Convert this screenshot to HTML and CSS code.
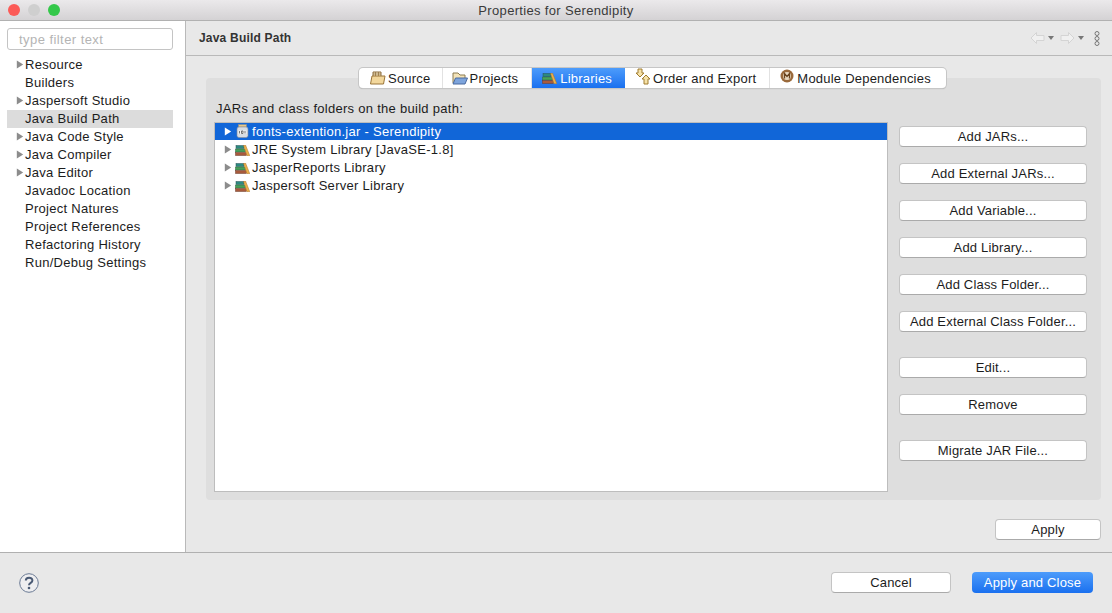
FILE: index.html
```html
<html>
    <head>
        <meta charset="utf-8">
        <title>Properties for Serendipity</title>
        <link rel="stylesheet" href="styles.css">
    </head>
    <body>
        <svg class="defs" width="0" height="0">
            <symbol id="lib" viewBox="0 0 15 11">
                <rect x="1" y="0.500" width="8" height="3" fill="#2c8a80" stroke="#27505a" stroke-width="0.500"/>
                <rect x="0.500" y="4" width="10" height="3" fill="#48a05a" stroke="#2c6a40" stroke-width="0.500"/>
                <rect x="0.500" y="7.500" width="11" height="3" fill="#a85a3c" stroke="#6a3a28" stroke-width="0.500"/>
                <path d="M8.500 0.500 L10.500 0 L14.800 10.800 L12 10.800 Z" fill="#eeb04a" stroke="#a8742a" stroke-width="0.500"/>
            </symbol>
            <symbol id="arrow" viewBox="0 0 10 10">
                <path d="M1 0 L9 5 L1 10 Z"/>
            </symbol>
        </svg>

        <div class="titlebar">
            <div class="lights">
                <span class="light red"></span>
                <span class="light grey"></span>
                <span class="light green"></span>
            </div>
            <div class="title">Properties for Serendipity</div>
        </div>

        <div class="middle">
            <div class="sidebar">
                <div class="filter">type filter text</div>
                <ul class="tree">
                    <li><svg class="twisty"><use href="#arrow"/></svg>Resource</li>
                    <li>Builders</li>
                    <li><svg class="twisty"><use href="#arrow"/></svg>Jaspersoft Studio</li>
                    <li class="current">Java Build Path</li>
                    <li><svg class="twisty"><use href="#arrow"/></svg>Java Code Style</li>
                    <li><svg class="twisty"><use href="#arrow"/></svg>Java Compiler</li>
                    <li><svg class="twisty"><use href="#arrow"/></svg>Java Editor</li>
                    <li>Javadoc Location</li>
                    <li>Project Natures</li>
                    <li>Project References</li>
                    <li>Refactoring History</li>
                    <li>Run/Debug Settings</li>
                </ul>
            </div>

            <div class="main">
                <div class="main-head">
                    <div class="main-title">Java Build Path</div>
                    <div class="nav">
                        <svg width="15" height="12" viewBox="0 0 15 12"><path d="M1 6 L6.500 0.500 V3.500 H14 V8.500 H6.500 V11.500 Z" fill="#f0f0f0" stroke="#d4d4d4"/></svg>
                        <svg class="drop" width="6" height="4" viewBox="0 0 6 4"><path d="M0 0 H6 L3 4 Z"/></svg>
                        <svg class="fwd" width="15" height="12" viewBox="0 0 15 12"><path d="M14 6 L8.500 0.500 V3.500 H1 V8.500 H8.500 V11.500 Z" fill="#f0f0f0" stroke="#d4d4d4"/></svg>
                        <svg class="drop" width="6" height="4" viewBox="0 0 6 4"><path d="M0 0 H6 L3 4 Z"/></svg>
                        <svg class="dots" width="6" height="15" viewBox="0 0 6 15">
                            <circle cx="3" cy="2.500" r="2" fill="none" stroke="#777"/>
                            <circle cx="3" cy="7.500" r="2" fill="none" stroke="#777"/>
                            <circle cx="3" cy="12.500" r="2" fill="none" stroke="#777"/>
                        </svg>
                    </div>
                </div>

                <div class="main-body">
                    <div class="tabs">
                        <div class="tab">
                            <svg width="16" height="14" viewBox="0 0 16 14">
                                <path d="M3 5 V1 H11 V5" fill="#f3e3c0" stroke="#8a6a3a"/>
                                <path d="M5.500 1 V5 M8.500 1 V5 M3 3 H11" stroke="#8a6a3a" stroke-width="0.700"/>
                                <path d="M0.500 13 L2 5 H15 L13.500 13 Z" fill="#f2d79c" stroke="#9a7438"/>
                            </svg>Source
                        </div>
                        <div class="tab">
                            <svg width="16" height="14" viewBox="0 0 16 14">
                                <path d="M1 12 V2 H6 L8 4 H13 V7" fill="#f3e3b8" stroke="#8a7a50"/>
                                <path d="M1 13 L3.500 7 H15.500 L13 13 Z" fill="#7da4dc" stroke="#4a6aa0"/>
                            </svg>Projects
                        </div>
                        <div class="tab on">
                            <svg width="15" height="11"><use href="#lib"/></svg>Libraries
                        </div>
                        <div class="tab">
                            <svg class="up" width="16" height="17" viewBox="0 0 16 17">
                                <path d="M3 1 H7 V5 H9 L5 9 L1 5 H3 Z" fill="#f6e2a8" stroke="#a07c30"/>
                                <path d="M11 7 L15 11 H13 V16 H9 V11 H7 Z" fill="#f6e2a8" stroke="#a07c30"/>
                            </svg>Order and Export
                        </div>
                        <div class="tab">
                            <svg class="up" width="14" height="14" viewBox="0 0 14 14">
                                <circle cx="7" cy="7" r="6.500" fill="#9a6a3c"/>
                                <circle cx="7" cy="7" r="4" fill="#e8d8c0"/>
                                <path d="M4.500 9.500 V4.500 L7 7.500 L9.500 4.500 V9.500" fill="none" stroke="#6a4520" stroke-width="1.300"/>
                            </svg>Module Dependencies
                        </div>
                    </div>

                    <div class="panel">
                        <div class="panel-label">JARs and class folders on the build path:</div>
                        <div class="panel-row">
                            <div class="entries">
                                <div class="entry picked">
                                    <svg class="twisty"><use href="#arrow"/></svg>
                                    <svg class="jar" width="13" height="14" viewBox="0 0 13 14">
                                        <rect x="2.500" y="0.500" width="8" height="2.500" fill="#e8c98a" stroke="#8a8a8a" stroke-width="0.600"/>
                                        <rect x="1" y="3" width="11" height="10.500" rx="2" fill="#d8dde4" stroke="#8a8f98" stroke-width="0.600"/>
                                        <path d="M2.500 6.500 H10.500 V10 H2.500 Z" fill="#f4f4f4"/>
                                        <path d="M3.500 7 V9.500 M5.500 7 H7 V9.500 H5.500 Z M9 7 V9.500" stroke="#444" stroke-width="0.700" fill="none"/>
                                    </svg>
                                    fonts-extention.jar - Serendipity
                                </div>
                                <div class="entry">
                                    <svg class="twisty"><use href="#arrow"/></svg>
                                    <svg class="books" width="15" height="11"><use href="#lib"/></svg>
                                    JRE System Library [JavaSE-1.8]
                                </div>
                                <div class="entry">
                                    <svg class="twisty"><use href="#arrow"/></svg>
                                    <svg class="books" width="15" height="11"><use href="#lib"/></svg>
                                    JasperReports Library
                                </div>
                                <div class="entry">
                                    <svg class="twisty"><use href="#arrow"/></svg>
                                    <svg class="books" width="15" height="11"><use href="#lib"/></svg>
                                    Jaspersoft Server Library
                                </div>
                            </div>
                            <div class="actions">
                                <button>Add JARs...</button>
                                <button>Add External JARs...</button>
                                <button>Add Variable...</button>
                                <button>Add Library...</button>
                                <button>Add Class Folder...</button>
                                <button>Add External Class Folder...</button>
                                <button class="apart">Edit...</button>
                                <button>Remove</button>
                                <button class="apart">Migrate JAR File...</button>
                            </div>
                        </div>
                    </div>

                    <div class="apply-row">
                        <button class="apply">Apply</button>
                    </div>
                </div>
            </div>
        </div>

        <div class="footer">
            <svg class="help" width="20" height="20" viewBox="0 0 20 20">
                <circle cx="10" cy="10" r="9.300" fill="#eeeef0" stroke="#6a7a94" stroke-width="1"/>
                <path d="M6.800 7.600 C6.800 3.800 13.400 3.800 13.400 7.500 C13.400 10 10 9.800 10 12.300" fill="none" stroke="#4a5a74" stroke-width="2"/>
                <circle cx="10" cy="15" r="1.300" fill="#4a5a74"/>
            </svg>
            <div class="footer-btns">
                <button class="cancel">Cancel</button>
                <button class="primary">Apply and Close</button>
            </div>
        </div>
    </body>
</html>
```

FILE: styles.css
```css
* {
    box-sizing: border-box;
}
html, body {
    height: 100%;
}
body {
    margin: 0;
    display: flex;
    flex-direction: column;
    height: 613px;
    overflow: hidden;
    font-family: "Liberation Sans", Arial, sans-serif;
    font-size: 13px;
    letter-spacing: 0.28px;
    color: #1c1c1c;
    background-color: #e8e8e8;
}
.defs {
    position: absolute;
}
svg {
    flex: none;
}

/* window title */
.titlebar {
    height: 21px;
    flex: none;
    display: flex;
    align-items: center;
    background: linear-gradient(#ebe9eb, #d4d2d4);
    border-bottom: 1px solid #b1b1b1;
}
.lights {
    display: flex;
    gap: 8px;
    margin-left: 8px;
    width: 60px;
}
.light {
    width: 12px;
    height: 12px;
    border-radius: 50%;
}
.red { background-color: #fc5b57; }
.grey { background-color: #cfcfcf; }
.green { background-color: #34c84a; }
.title {
    flex: 1;
    text-align: center;
    color: #3a3a3a;
    letter-spacing: 0.33px;
    padding-right: 68px;
}

.middle {
    flex: 1;
    display: flex;
    min-height: 0;
}

/* left tree */
.sidebar {
    width: 186px;
    flex: none;
    background-color: #fff;
    border-right: 1px solid #b9b9b9;
    padding: 7px 12px 0 7px;
}
.filter {
    height: 22px;
    line-height: 21px;
    border: 1px solid #c4c4c4;
    border-radius: 3px;
    padding-left: 11px;
    color: #b4b4b4;
    letter-spacing: 0.44px;
}
.tree {
    list-style: none;
    margin: 6px 0 0;
    padding: 0;
}
.tree li {
    position: relative;
    height: 18px;
    line-height: 18px;
    padding-left: 18px;
}
.tree li.current {
    background-color: #dcdcdc;
}
.tree .twisty {
    position: absolute;
    left: 9px;
    top: 4px;
}
.twisty {
    width: 8px;
    height: 9px;
    fill: #8c8c8c;
}

/* right side */
.main {
    flex: 1;
    display: flex;
    flex-direction: column;
    min-width: 0;
}
.main-head {
    height: 35px;
    flex: none;
    display: flex;
    align-items: center;
    justify-content: space-between;
    padding: 0 12px 1px 13px;
    border-bottom: 1px solid #b9b9b9;
}
.main-title {
    font-weight: bold;
    font-size: 12px;
    color: #333;
    letter-spacing: 0.2px;
}
.nav {
    display: flex;
    align-items: center;
    margin-top: 1px;
}
.drop {
    margin-left: 3px;
    fill: #777;
}
.fwd {
    margin-left: 6px;
}
.dots {
    margin-left: 10px;
}
.main-body {
    flex: 1;
    padding: 22px 11px 0 20px;
    position: relative;
}

/* tab strip */
.tabs {
    position: absolute;
    top: 12px;
    left: 173px;
    display: flex;
    height: 20px;
    letter-spacing: 0.22px;
    background-color: #fff;
    border-radius: 4px;
    box-shadow: 0 0 0 1px #c6c6c6, 0 1px 1px #aaa;
    overflow: hidden;
}
.tab {
    display: flex;
    align-items: center;
    gap: 2px;
    padding: 0 13px 0 10px;
    border-right: 1px solid #e2e2e2;
    white-space: nowrap;
}
.tab:first-child {
    padding-left: 11px;
    padding-right: 11px;
}
.tab:nth-child(2) {
    padding-left: 9px;
}
.tab:last-child {
    gap: 3px;
    border-right: none;
    padding-right: 15px;
}
.tab.on {
    gap: 3px;
    background: linear-gradient(#4d9cfb, #1a70ef);
    color: #fff;
    border-right: none;
}
.tab .up {
    margin-top: -4px;
}

/* libraries panel */
.panel {
    height: 422px;
    background-color: #dedede;
    border-radius: 4px;
    padding: 0 14px 8px 8px;
    display: flex;
    flex-direction: column;
}
.panel-label {
    height: 44px;
    padding: 23px 0 0 2px;
    line-height: 15px;
}
.panel-row {
    flex: 1;
    display: flex;
    gap: 11px;
    min-height: 0;
}
.entries {
    flex: 1;
    background-color: #fff;
    border: 1px solid #bdbdbd;
}
.entry {
    display: flex;
    align-items: center;
    height: 17px;
    padding: 0 0 1px 9px;
    margin-bottom: 1px;
}
.entry.picked {
    background-color: #1166d8;
    color: #fff;
}
.entry.picked .twisty {
    fill: #fff;
}
.jar {
    margin: 0 3px 0 4px;
}
.books {
    margin: 2px 2px 0 3px;
}

/* buttons */
button {
    font-family: inherit;
    font-size: 13px;
    letter-spacing: 0.18px;
    color: #1c1c1c;
    height: 21px;
    padding: 0;
    background-color: #fff;
    border: 1px solid #c4c4c4;
    border-bottom-color: #aaa;
    border-radius: 4px;
}
.actions {
    width: 188px;
    flex: none;
    padding-top: 4px;
    display: flex;
    flex-direction: column;
    gap: 16px;
}
.actions .apart {
    margin-top: 9px;
}
.apply-row {
    display: flex;
    justify-content: flex-end;
    margin: 19px 0 0;
}
.apply {
    width: 106px;
}

/* bottom bar */
.footer {
    height: 61px;
    flex: none;
    display: flex;
    align-items: center;
    justify-content: space-between;
    padding: 0 19px;
    border-top: 1px solid #b0b0b0;
}
.footer-btns {
    display: flex;
    gap: 21px;
    margin-bottom: 2px;
}
.cancel {
    width: 120px;
}
.primary {
    width: 121px;
    color: #fff;
    border: none;
    background: linear-gradient(#4d9cfb, #1a70ef);
}
```
